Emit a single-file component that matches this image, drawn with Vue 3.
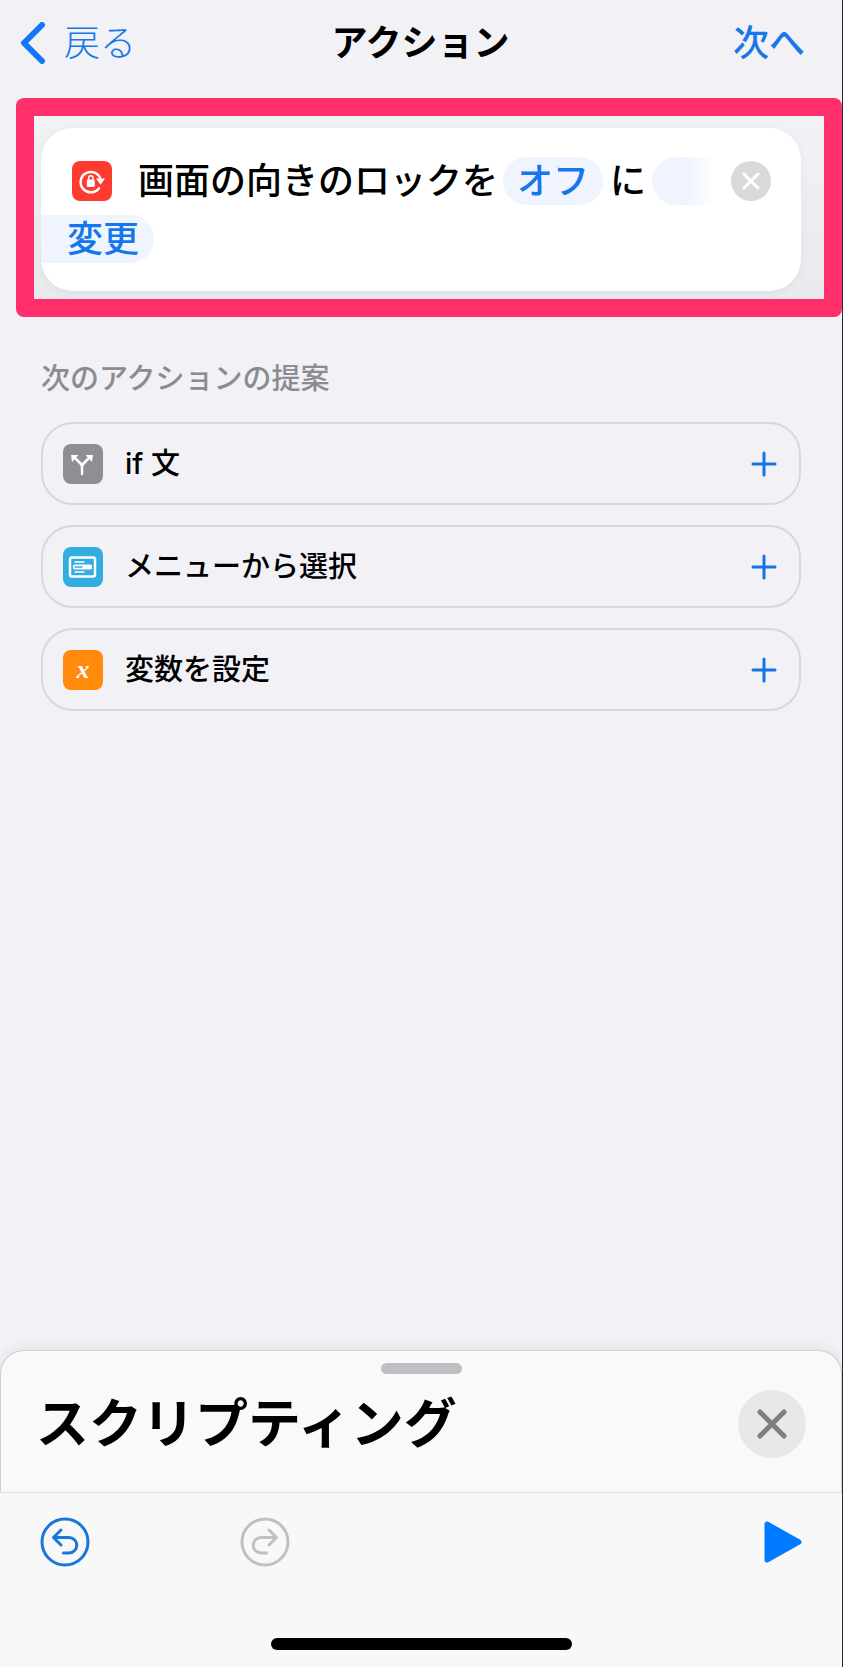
<template>
  <div class="screen">
    <header class="nav-bar">
      <button class="nav-button back" type="button">
        <svg class="chevron" viewBox="0 0 26 42" aria-hidden="true">
          <path d="M22 3 4 21l18 18" />
        </svg>
        戻る
      </button>
      <h1>アクション</h1>
      <button class="nav-button next" type="button">次へ</button>
    </header>

    <main>
      <section class="highlight">
        <article class="action-card">
          <div class="action-line">
            <span class="app-icon red">
              <svg viewBox="0 0 40 40" aria-hidden="true">
                <path class="stroke" d="M28.2 17.2A10.2 10.2 0 1 0 27 27.2" />
                <path class="solid" d="M24 17.6h9l-4.4 6.2z" />
                <rect class="solid" x="14.8" y="18.6" width="8" height="7.4" rx="1" />
                <path class="stroke thin" d="M16.6 19v-2a2.2 2.2 0 0 1 4.4 0v2" />
              </svg>
            </span>
            <span class="action-text">画面の向きのロックを</span>
            <button class="token" type="button">オフ</button>
            <span class="action-text">に</span>
            <span class="token-fade"></span>
            <button class="remove" type="button" aria-label="削除">
              <svg viewBox="0 0 40 40" aria-hidden="true">
                <path d="m13 13 14 14m0-14L13 27" />
              </svg>
            </button>
          </div>
          <button class="token wrapped" type="button">変更</button>
        </article>
      </section>

      <section class="suggestions">
        <h2>次のアクションの提案</h2>
        <ul>
          <li v-for="item in suggestions" :key="item.id">
            <button class="suggestion" type="button" @click="add(item)">
              <span class="app-icon" :class="item.color">
                <svg v-if="item.id === 'if'" viewBox="0 0 40 40" aria-hidden="true">
                  <path class="stroke" d="M19 30v-7q0-2-1.5-3.5L11 13M19 23q0-2 1.5-3.5L27 13" />
                  <path class="solid" d="M8 11h7.5L9 18zM30 11h-7.5L29 18z" />
                </svg>
                <svg v-else-if="item.id === 'menu'" viewBox="0 0 40 40" aria-hidden="true">
                  <rect class="stroke" x="7" y="10.5" width="25" height="19" rx="2" />
                  <path class="stroke thin" d="M12 15h9M12 25h9" />
                  <rect class="solid" x="10" y="17.5" width="19" height="5" rx="1.5" />
                  <path class="slot" d="M12 20h7" />
                </svg>
                <i v-else class="variable">x</i>
              </span>
              <span class="label">{{ item.label }}</span>
              <svg class="plus" viewBox="0 0 26 26" aria-hidden="true">
                <path d="M13 2v22M2 13h22" />
              </svg>
            </button>
          </li>
        </ul>
      </section>
    </main>

    <section class="sheet">
      <div class="grabber"></div>
      <div class="sheet-head">
        <h2>スクリプティング</h2>
        <button class="close" type="button" aria-label="閉じる">
          <svg viewBox="0 0 68 68" aria-hidden="true">
            <path d="m22 22 24 24m0-24L22 46" />
          </svg>
        </button>
      </div>
    </section>

    <footer class="toolbar">
      <div class="tools">
        <button class="tool" type="button" aria-label="取り消す">
          <svg viewBox="0 0 50 50" aria-hidden="true">
            <circle cx="25" cy="25" r="23" />
            <path d="m21 13-7.5 7.5L21 28M14 20.5h15a7.5 7.5 0 0 1 0 15.5h-5.5" />
          </svg>
        </button>
        <button class="tool" type="button" aria-label="やり直す" disabled>
          <svg viewBox="0 0 50 50" aria-hidden="true">
            <circle cx="25" cy="25" r="23" />
            <path d="m29 13 7.5 7.5L29 28M36 20.5H21a7.5 7.5 0 0 0 0 15.5h5.5" />
          </svg>
        </button>
        <button class="play" type="button" aria-label="実行">
          <svg viewBox="0 0 38 42" aria-hidden="true">
            <path d="M3 3v36l32-18z" />
          </svg>
        </button>
      </div>
      <div class="home-indicator"></div>
    </footer>
  </div>
</template>

<script setup>
import { ref } from 'vue'

const suggestions = [
  { id: 'if', label: 'if 文', color: 'gray' },
  { id: 'menu', label: 'メニューから選択', color: 'blue' },
  { id: 'variable', label: '変数を設定', color: 'orange' },
]

const added = ref([])

function add(item) {
  added.value = [...added.value, item.id]
}
</script>

<style>
body {
  background: #f1f1f6;
}
</style>

<style scoped>
.screen {
  display: flex;
  flex-direction: column;
  box-sizing: border-box;
  min-height: 100vh;
  border-right: 1px solid #2c2c2e;
  background: #f1f1f6;
  color: #000;
  font-family: Inter, "Noto Sans CJK JP", sans-serif;
}

h1,
h2,
ul {
  margin: 0;
  padding: 0;
}

ul { list-style: none; }

button {
  padding: 0;
  border: 0;
  background: transparent;
  color: inherit;
  font: inherit;
  cursor: pointer;
}

svg {
  display: block;
  fill: none;
  stroke-linecap: round;
  stroke-linejoin: round;
}

.nav-bar {
  display: grid;
  grid-template-columns: 1fr auto 1fr;
  align-items: center;
  height: 86px;
  padding: 0 37px 0 20px;
}

.nav-bar h1 {
  padding-left: 16px;
  font-size: 36px;
  font-weight: 700;
  line-height: 48px;
}

.nav-button {
  display: flex;
  align-items: center;
  color: #1877e8;
  font-size: 36px;
  line-height: 48px;
}

.back {
  gap: 18px;
  justify-self: start;
  font-weight: 300;
}

.next {
  justify-self: end;
  font-weight: 500;
}

.chevron {
  width: 26px;
  height: 42px;
  stroke: #1478f6;
  stroke-width: 6;
}

.highlight {
  margin: 12px 0 0 16px;
  padding: 12px 23px 8px 7px;
  border: 18px solid #ff2f6b;
  border-radius: 8px;
  background: linear-gradient(#f1f1f6, #eaeaee);
  background-clip: padding-box;
}

.action-card {
  box-sizing: border-box;
  min-height: 163px;
  padding: 29px 30px 27px 0;
  border-radius: 32px;
  background: #fff;
  box-shadow: 0 2px 10px rgba(0, 0, 0, .05);
  font-size: 36px;
  font-weight: 500;
  line-height: 48px;
}

.action-line {
  display: flex;
  align-items: center;
  padding-left: 31px;
  white-space: nowrap;
}

.action-line .app-icon { margin-right: 26px; }

.app-icon {
  display: grid;
  flex: none;
  place-items: center;
  width: 40px;
  height: 40px;
  border-radius: 8px;
}

.app-icon svg {
  width: 40px;
  height: 40px;
}

.red { background: #ff3b30; }
.gray { background: #8e8e93; }
.blue { background: #32ade0; }
.orange { background: #ff8a0c; }

.stroke {
  stroke: #fff;
  stroke-width: 2.5;
}

.thin { stroke-width: 1.5; }
.solid { fill: #fff; }

.slot {
  stroke: #32ade0;
  stroke-width: 1.5;
}

.token {
  height: 48px;
  padding: 0 14px;
  border-radius: 24px;
  background: #eff4ff;
  color: #1477ee;
}

.action-line .token { margin: 0 7px 0 5px; }

.token-fade {
  width: 62px;
  height: 48px;
  margin-left: 6px;
  border-radius: 24px 0 0 24px;
  background: linear-gradient(90deg, #eff4ff 60%, #fff);
}

.wrapped {
  display: block;
  margin-top: 10px;
  padding: 0 15px 0 26px;
  border-radius: 0 24px 24px 0;
}

.remove {
  width: 40px;
  height: 40px;
  margin-left: auto;
  border-radius: 50%;
  background: #d9d9d9;
}

.remove svg {
  stroke: #fff;
  stroke-width: 3;
}

.suggestions { padding: 41px 41px 40px; }

.suggestions h2 {
  color: #8b8b90;
  font-size: 29px;
  font-weight: 500;
  line-height: 42px;
}

.suggestions ul {
  display: grid;
  gap: 20px;
  margin-top: 22px;
}

.suggestion {
  display: flex;
  align-items: center;
  box-sizing: border-box;
  width: 100%;
  height: 83px;
  padding: 0 22px 0 20px;
  border: 2px solid #d8d7dc;
  border-radius: 32px;
  font-size: 29px;
  font-weight: 500;
  line-height: 42px;
}

.label { margin-left: 22px; }

.variable {
  font-family: "Liberation Serif", serif;
  font-size: 26px;
  font-weight: 700;
  line-height: 36px;
  color: #fff;
}

.plus {
  width: 26px;
  height: 26px;
  margin-left: auto;
  stroke: #1473e6;
  stroke-width: 3;
}

.sheet {
  box-sizing: border-box;
  min-height: 142px;
  margin-top: auto;
  padding: 12px 35px 33px;
  border: 1px solid #d0d0d3;
  border-bottom: 0;
  border-radius: 24px 24px 0 0;
  background: #f9f9f9;
  box-shadow: 0 -2px 14px rgba(0, 0, 0, .07);
}

.grabber {
  width: 81px;
  height: 11px;
  margin: 0 auto;
  border-radius: 6px;
  background: #bfbfc3;
}

.sheet-head {
  display: flex;
  align-items: center;
  justify-content: space-between;
  margin-top: 16px;
}

.sheet-head h2 {
  font-size: 53px;
  font-weight: 700;
  line-height: 68px;
}

.close {
  width: 68px;
  height: 68px;
  border-radius: 50%;
  background: #e8e8ea;
}

.close svg {
  stroke: #7f7f82;
  stroke-width: 5;
}

.toolbar {
  padding: 24px 40px 17px;
  border-top: 1px solid #dededf;
  background: #f8f8f8;
}

.tools {
  display: flex;
  align-items: center;
  gap: 150px;
}

.tool {
  width: 50px;
  height: 50px;
  color: #1976dc;
}

.tool:disabled {
  color: #c0c0c0;
  cursor: default;
}

.tool svg {
  stroke: currentColor;
  stroke-width: 3;
}

.play {
  width: 38px;
  height: 42px;
  margin-left: auto;
}

.play svg {
  fill: #007aff;
  stroke: #007aff;
  stroke-width: 5;
}

.home-indicator {
  width: 301px;
  height: 12px;
  margin: 71px auto 0;
  border-radius: 6px;
  background: #000;
}
</style>
